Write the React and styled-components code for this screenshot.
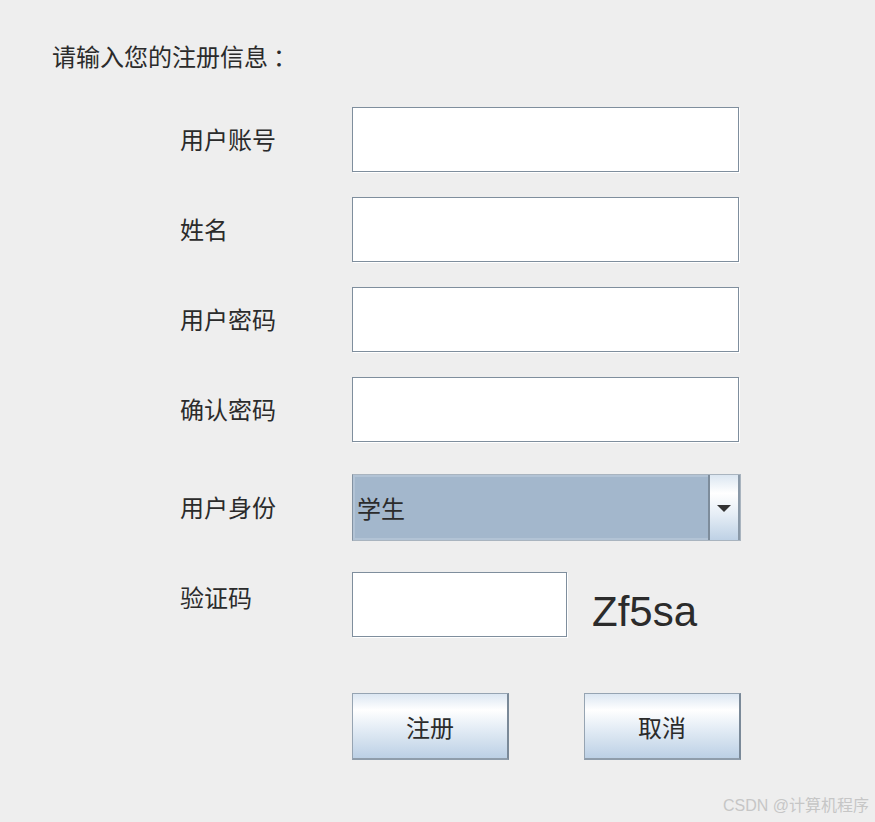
import React from 'react'
import styled, { createGlobalStyle } from 'styled-components'

const GlobalStyle = createGlobalStyle`
    html, body {
        margin: 0;
        padding: 0;
        background: #eeeeee;
    }
    body {
        font-family: "Noto Sans CJK SC", "Noto Sans", sans-serif;
        color: #2b2b2b;
    }
`

function App() {
    return (
        <Page>
            <GlobalStyle />
            <Title>请输入您的注册信息<Colon>：</Colon></Title>
            <Form>
                <Row $gap={0}>
                    <Label>用户账号</Label>
                    <TextField />
                </Row>
                <Row $gap={25}>
                    <Label>姓名</Label>
                    <TextField />
                </Row>
                <Row $gap={25}>
                    <Label>用户密码</Label>
                    <TextField type="password" />
                </Row>
                <Row $gap={25}>
                    <Label>确认密码</Label>
                    <TextField type="password" />
                </Row>
                <Row $gap={32}>
                    <Label>用户身份</Label>
                    <Combo>
                        <ComboValue>学生</ComboValue>
                        <ArrowButton>
                            <Arrow />
                        </ArrowButton>
                    </Combo>
                </Row>
                <Row $gap={31}>
                    <Label $lift={7}>验证码</Label>
                    <CaptchaRow>
                        <CaptchaField />
                        <Captcha>Zf5sa</Captcha>
                    </CaptchaRow>
                </Row>
                <Row $gap={56}>
                    <span />
                    <Buttons>
                        <Button>注册</Button>
                        <Button>取消</Button>
                    </Buttons>
                </Row>
            </Form>
            <Watermark>CSDN @计算机程序</Watermark>
        </Page>
    )
}

export default App

const Page = styled.div`
    position: relative;
    width: 875px;
    height: 822px;
    box-sizing: border-box;
    padding: 40px 0 0 52px;
`

const Title = styled.div`
    font-size: 24px;
    line-height: 32px;
    height: 34px;
`

const Colon = styled.span`
    padding-left: 5px;
`

const Form = styled.div`
    display: flex;
    flex-direction: column;
    margin: 33px 0 0 128px;
`

const Row = styled.div`
    display: grid;
    grid-template-columns: 172px 389px;
    align-items: start;
    margin-top: ${p => p.$gap}px;
`

const Label = styled.div`
    font-size: 24px;
    line-height: 30px;
    align-self: center;
    margin-top: ${p => -2 - 2 * (p.$lift || 0)}px;
`

const TextField = styled.input`
    width: 387px;
    height: 65px;
    box-sizing: border-box;
    margin: 0;
    border: 1px solid #7f8e9d;
    box-shadow: 1px 1px 0 #ffffff;
    background: #ffffff;
    outline: none;
    font-size: 22px;
`

const Combo = styled.div`
    display: flex;
    width: 389px;
    height: 67px;
    box-sizing: border-box;
    border: 1px solid #a9b4bf;
    border-left-color: #8392a2;
    background: #a3b7cc;
    box-shadow: inset 0 0 0 2px #b2c3d5;
`

const ComboValue = styled.div`
    flex: 1;
    display: flex;
    align-items: center;
    padding-left: 4px;
    font-size: 24px;
    color: #2b2b2b;
`

const ArrowButton = styled.div`
    width: 28px;
    display: flex;
    align-items: center;
    justify-content: center;
    border-left: 2px solid #7d8c9b;
    border-right: 2px solid #8a99a8;
    background: linear-gradient(to bottom, #dbe6f1 0%, #ffffff 28%, #e6eef6 60%, #bed1e5 100%);
`

const Arrow = styled.div`
    width: 0;
    height: 0;
    border-left: 7px solid transparent;
    border-right: 7px solid transparent;
    border-top: 7px solid #333333;
    margin-top: 1px;
`

const CaptchaRow = styled.div`
    display: flex;
    align-items: flex-start;
    gap: 25px;
`

const CaptchaField = styled(TextField)`
    width: 215px;
`

const Captcha = styled.div`
    font-family: "Liberation Sans", Arial, sans-serif;
    font-size: 42px;
    line-height: 48px;
    color: #2b2b2b;
    margin-top: 16px;
`

const Buttons = styled.div`
    display: flex;
    justify-content: space-between;
    width: 389px;
`

const Button = styled.button`
    width: 157px;
    height: 67px;
    box-sizing: border-box;
    margin: 0;
    padding: 0;
    border: 1px solid #96a4b2;
    border-right: 2px solid #7a8998;
    border-bottom: 2px solid #8f9dab;
    background: linear-gradient(to bottom, #dce7f2 0%, #ffffff 25%, #e3ecf5 55%, #bcd0e5 100%);
    font-family: "Noto Sans CJK SC", "Noto Sans", sans-serif;
    font-size: 24px;
    color: #2b2b2b;
    cursor: pointer;
`

const Watermark = styled.div`
    position: absolute;
    right: 6px;
    bottom: 6px;
    font-family: "Liberation Sans", "Noto Sans CJK SC", sans-serif;
    font-size: 16px;
    color: #c6c6c6;
`
